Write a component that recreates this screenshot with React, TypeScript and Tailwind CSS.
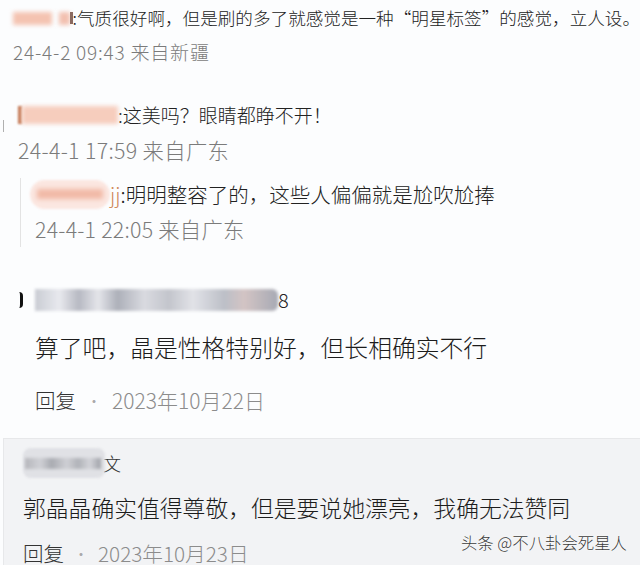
import React from "react";

export default function App() {
  return (
    <div className="relative w-[640px] h-[565px] overflow-hidden bg-[#fcfdfe] font-['Noto_Sans_CJK_SC',sans-serif] font-light flex flex-col">
      {/* comment 1 */}
      <div className="pl-[13px] pt-[4px]">
        <div className="flex items-center h-[28px] leading-[28px] text-[17.6px] text-[#222] whitespace-nowrap">
          <span className="w-[47px] h-[13px] bg-[#f4c3b1] blur-[2px]" />
          <span className="w-[8px]" />
          <span className="w-[14px] h-[13px] bg-[#f2c0b0] blur-[2px]" />
          <span className="w-[3px] h-[12px] bg-[#8a6a60] blur-[0.5px]" />
          <span>:气质很好啊，但是刷的多了就感觉是一种“明星标签”的感觉，立人设。</span>
        </div>
        <div className="mt-[6px] h-[28px] leading-[28px] text-[19px] tracking-[0.8px] text-[#7b7b7b] whitespace-nowrap">24-4-2 09:43 来自新疆</div>
      </div>

      {/* comment 2 */}
      <div className="relative pl-[18px] mt-[35px]">
        <span className="absolute left-[3px] top-[19px] w-px h-[12px] bg-[#b0b0b0]" />
        <div className="flex items-center h-[28px] leading-[28px] text-[19px] text-[#222] whitespace-nowrap">
          <span className="w-[4px] h-[18px] bg-[#c47a56] blur-[0.8px]" />
          <span className="w-[96px] h-[18px] bg-[#f6cdbd] blur-[2px]" />
          <span>:这美吗？眼睛都睁不开！</span>
        </div>
        <div className="mt-[7px] h-[28px] leading-[28px] text-[21.3px] tracking-[0.35px] text-[#7b7b7b] whitespace-nowrap">24-4-1 17:59 来自广东</div>
      </div>

      {/* nested reply */}
      <div className="ml-[20px] mt-[14px] border-l border-[#e3e3e3] pl-[9px] pt-[2px] pb-[4px]">
        <div className="flex items-center h-[28px] leading-[28px] text-[20.5px] text-[#222] whitespace-nowrap">
          <span className="w-[80px] h-[29px] rounded-full bg-[#fbe7e1] flex items-center justify-center blur-[1px]">
            <span className="w-[66px] h-[10px] bg-[#f1b9a6] blur-[2px]" />
          </span>
          <span className="text-[#d08a5c]">jj</span>
          <span>:明明整容了的，这些人偏偏就是尬吹尬捧</span>
        </div>
        <div className="mt-[7px] pl-[5px] h-[28px] leading-[28px] text-[21.3px] tracking-[0.25px] text-[#7b7b7b] whitespace-nowrap">24-4-1 22:05 来自广东</div>
      </div>

      {/* comment 3 */}
      <div className="relative pl-[35px] mt-[39px]">
        <span className="absolute left-[19px] top-[6px] w-[4px] h-[16px] rounded-r-full border-r-[3px] border-[#111]" />
        <div className="flex items-center h-[28px] whitespace-nowrap">
          <span className="w-[243px] h-[22px] rounded-r-[6px] bg-[linear-gradient(90deg,#c9ccd3_0%,#e8e9ee_10%,#b7b9c2_18%,#e4e5ea_26%,#adb0b9_34%,#d9dae0_45%,#c3c5cc_55%,#e1e2e7_65%,#bcbfc7_78%,#d3c4c4_86%,#a7aab4_100%)] blur-[1.5px]" />
          <span className="text-[20px] leading-[28px] text-[#222]">8</span>
        </div>
        <div className="mt-[17px] h-[32px] leading-[32px] text-[23.8px] text-[#1c1c1c] whitespace-nowrap">算了吧，晶是性格特别好，但长相确实不行</div>
        <div className="mt-[22px] flex items-center h-[30px] leading-[30px] whitespace-nowrap">
          <span className="text-[20.5px] text-[#333]">回复</span>
          <span className="text-[16px] text-[#aaa] mx-[10px]">·</span>
          <span className="text-[21px] text-[#8c8c8c]">2023年10月22日</span>
        </div>
      </div>

      {/* grey panel */}
      <div className="relative mt-[23px] ml-[3px] flex-1 bg-[#f2f3f5] border-t border-l border-[#e7e8ea] pl-[19px]">
        <div className="mt-[9px] flex items-center h-[30px] whitespace-nowrap">
          <span className="w-[82px] h-[30px] rounded-[8px] bg-[#e0e1e5] flex items-center blur-[1px] pl-[2px]">
            <span className="w-[76px] h-[11px] bg-[linear-gradient(90deg,#b5b6bb_0%,#d0d1d6_20%,#a9abb1_35%,#cfd0d5_55%,#b0b2b8_70%,#d3d4d9_85%,#9fa1a8_100%)] blur-[1px]" />
          </span>
          <span className="text-[18px] text-[#333] -ml-[2px]">文</span>
        </div>
        <div className="mt-[14px] h-[32px] leading-[32px] text-[22.8px] text-[#1c1c1c] whitespace-nowrap">郭晶晶确实值得尊敬，但是要说她漂亮，我确无法赞同</div>
        <div className="mt-[14px] flex items-center h-[30px] leading-[30px] whitespace-nowrap">
          <span className="text-[20.5px] text-[#333]">回复</span>
          <span className="text-[16px] text-[#aaa] mx-[9px]">·</span>
          <span className="text-[20.7px] text-[#8c8c8c]">2023年10月23日</span>
        </div>
        <div className="absolute right-[13px] top-[92px] text-[16.4px] leading-[22px] text-[#3a3a3a] whitespace-nowrap [text-shadow:0_0_2px_#fff,0_0_1px_#fff]">头条 @不八卦会死星人</div>
      </div>
    </div>
  );
}
